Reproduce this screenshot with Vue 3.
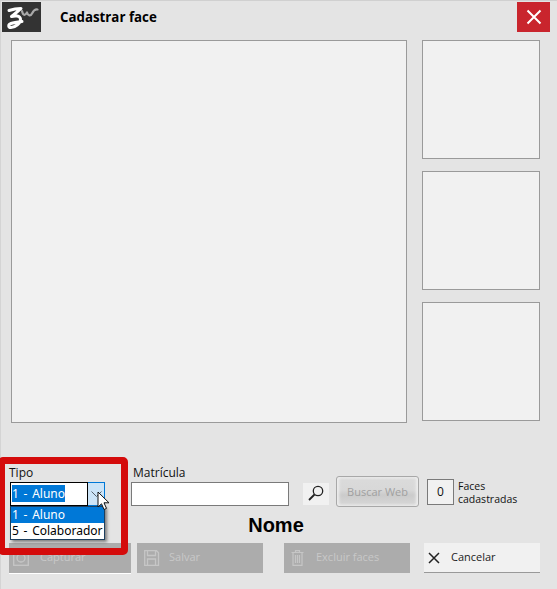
<template>
  <div class="window">
    <header class="title-bar">
      <div class="logo">
        <svg width="39" height="30" viewBox="0 0 39 30">
          <path d="M7 8.5C10 7.5 15 6.5 19 6.5C16.5 9 13 11.5 9.5 14.5C13 13.5 18 13.5 18.5 17C19 21 13 25.5 9 25.5C6 25.5 6 22.5 9 21.5C12 20.5 16 20 20 19.5" fill="none" stroke="#fff" stroke-width="3" stroke-linecap="round" stroke-linejoin="round" />
          <path d="M20 9C21 13.5 23 14 25 10.5C26 14 28.5 14.5 30 11.5C31 9.5 33 7 35.5 7.5" fill="none" stroke="#a8a8a8" stroke-width="2.2" stroke-linecap="round" stroke-linejoin="round" />
        </svg>
      </div>
      <h1 class="title">Cadastrar face</h1>
      <button class="close">
        <svg width="16" height="16" viewBox="0 0 16 16">
          <path d="M1.5 1.5L14.5 14.5M14.5 1.5L1.5 14.5" stroke="#fff" stroke-width="2" fill="none" />
        </svg>
      </button>
    </header>

    <section class="preview">
      <div class="main-frame"></div>
      <div class="thumbs">
        <div class="thumb"></div>
        <div class="thumb"></div>
        <div class="thumb"></div>
      </div>
    </section>

    <section class="form-row">
      <div class="field tipo">
        <label>Tipo</label>
        <div class="combo">
          <div class="combo-value"><span class="selected">{{ tipos[0] }}</span></div>
          <div class="combo-arrow">
            <svg width="11" height="7" viewBox="0 0 11 7">
              <path d="M0.5 0.5L5.5 5.5L10.5 0.5" fill="none" stroke="#56606a" stroke-width="1" />
            </svg>
          </div>
          <ul class="dropdown">
            <li v-for="(t, i) in tipos" :key="t" :class="{ active: i === 0 }">{{ t }}</li>
          </ul>
          <svg class="cursor" width="14" height="21" viewBox="0 0 14 21">
            <path d="M1 1V16L4.5 12.8L7 18.5L9.5 17.4L7 11.8H12Z" fill="#fff" stroke="#111" stroke-width="1" />
          </svg>
        </div>
      </div>
      <div class="field matricula">
        <label>Matrícula</label>
        <input type="text" />
      </div>
      <button class="search">
        <svg width="20" height="20" viewBox="0 0 20 20">
          <circle cx="12" cy="7" r="4.7" fill="none" stroke="#222" stroke-width="1.3" />
          <path d="M8.5 10.5L3 16" stroke="#222" stroke-width="1.8" fill="none" />
        </svg>
      </button>
      <button class="web">Buscar Web</button>
      <div class="count">0</div>
      <div class="count-label">Faces<br />cadastradas</div>
    </section>

    <div class="nome">Nome</div>

    <section class="actions">
      <button class="action capturar">
        <svg width="16" height="16" viewBox="0 0 16 16">
          <rect x="0.7" y="1.7" width="14.6" height="13.6" fill="none" stroke="#c6c6c6" stroke-width="1.3" />
          <circle cx="8" cy="8" r="4" fill="none" stroke="#c6c6c6" stroke-width="1.3" />
        </svg>
        <span>Capturar</span>
      </button>
      <button class="action salvar">
        <svg width="16" height="16" viewBox="0 0 16 16">
          <path d="M0.7 0.7H12.5L14.5 2.7V15.3H0.7Z M3.5 0.7V5.5H11.5V0.7 M3.5 15.3V9H11.5V15.3" fill="none" stroke="#c6c6c6" stroke-width="1.3" />
        </svg>
        <span>Salvar</span>
      </button>
      <button class="action excluir">
        <svg width="16" height="16" viewBox="0 0 16 16">
          <path d="M0.5 2.5H12.5M4.5 2.5V0.6H8.5V2.5M2 2.5V15.4H11V2.5M4.5 5V13M6.5 5V13M8.5 5V13" fill="none" stroke="#c6c6c6" stroke-width="1.2" />
        </svg>
        <span>Excluir faces</span>
      </button>
      <button class="action cancelar">
        <svg width="12" height="12" viewBox="0 0 12 12">
          <path d="M1 1L11 11M11 1L1 11" fill="none" stroke="#222" stroke-width="1.5" />
        </svg>
        <span>Cancelar</span>
      </button>
    </section>

    <div class="highlight"></div>
  </div>
</template>

<script setup>
const tipos = ['1 - Aluno', '5 - Colaborador']
</script>

<style>
html, body {
  margin: 0;
  background: #e4e4e4;
}
</style>

<style scoped>
.window {
  position: relative;
  width: 557px;
  height: 589px;
  box-sizing: border-box;
  padding-top: 2px;
  overflow: hidden;
  background: #e4e4e4;
  border-top: 1px solid #d0d0d0;
  box-shadow: inset 1px 0 0 #d4d4d4;
  font-family: "Open Sans", "Noto Sans", sans-serif;
  color: #111;
}

.title-bar {
  display: flex;
  align-items: center;
  height: 30px;
  margin-top: -1px;
  padding: 0 7px 0 2px;
}

.logo {
  width: 39px;
  height: 30px;
  background: #333;
}

.logo svg {
  display: block;
}

.title {
  flex: 1;
  margin: 0 0 0 19px;
  font-size: 13.3px;
  font-weight: 700;
  color: #000;
}

.close {
  display: flex;
  align-items: center;
  justify-content: center;
  width: 33px;
  height: 30px;
  padding: 0;
  border: none;
  background: #c9252d;
}

.preview {
  display: flex;
  gap: 15px;
  margin-top: 8px;
  padding-left: 11px;
}

.main-frame,
.thumb {
  box-sizing: border-box;
  background: #f1f1f1;
  border: 1px solid #9a9a9a;
}

.main-frame {
  width: 396px;
  height: 383px;
}

.thumbs {
  display: flex;
  flex-direction: column;
  gap: 12px;
}

.thumb {
  width: 118px;
  height: 119px;
}

.form-row {
  display: flex;
  align-items: flex-start;
  height: 48px;
  margin-top: 42px;
  padding-left: 10px;
  box-sizing: border-box;
}

.field label {
  display: block;
  height: 17px;
  font-size: 12px;
  line-height: 15px;
}

.tipo {
  width: 121px;
}

.tipo label {
  margin-left: -1px;
}

.combo {
  position: relative;
  display: flex;
  width: 95px;
  height: 24px;
  box-sizing: border-box;
  border: 1px solid #0078d7;
  font-family: "Noto Sans", sans-serif;
  font-size: 12px;
  word-spacing: 1.6px;
}

.combo-value {
  flex: 1;
  padding: 2px 0 0 1px;
  background: #fff;
  border: 1px solid #000;
  margin: -1px 0 -1px -1px;
  line-height: 17px;
}

.selected {
  display: inline-block;
  height: 17px;
  background: #0078d7;
  color: #fff;
}

.combo-arrow {
  display: flex;
  align-items: center;
  justify-content: center;
  width: 16px;
  background: #cce4f7;
}

.dropdown {
  position: absolute;
  top: 23px;
  left: -1px;
  width: 95px;
  box-sizing: border-box;
  margin: 0;
  padding: 0;
  list-style: none;
  background: #fff;
  border: 1px solid #1c3f5f;
  box-shadow: 2px 2px 3px rgba(0, 0, 0, 0.45);
  z-index: 2;
}

.dropdown li {
  height: 16px;
  padding-left: 1px;
  line-height: 16px;
  white-space: nowrap;
  color: #000;
}

.dropdown li.active {
  background: #0078d7;
  color: #fff;
}

.cursor {
  position: absolute;
  top: 8px;
  left: 86px;
  z-index: 3;
}

.matricula {
  width: 158px;
}

.matricula label {
  margin-left: 2px;
}

.matricula input {
  display: block;
  width: 158px;
  height: 24px;
  box-sizing: border-box;
  border: 1px solid #7a7a7a;
  background: #fff;
  padding: 0;
}

.search {
  display: flex;
  align-items: center;
  justify-content: center;
  width: 26px;
  height: 22px;
  margin: 18px 0 0 14px;
  padding: 0;
  border: none;
  background: #f1f1f1;
}

.web {
  width: 83px;
  height: 31px;
  margin: 11px 0 0 7px;
  padding: 0;
  border: 1px solid #a8a8a8;
  border-radius: 3px;
  background: linear-gradient(#e6e6e6, #dadada 12%, #d8d8d8 45%, #cbcbcb 62%, #d4d4d4 88%, #e4e4e4);
  box-shadow: inset 3px 0 3px -1px #eee, inset -3px 0 3px -1px #eee;
  font-family: inherit;
  font-size: 11px;
  color: #a0a0a0;
}

.count {
  width: 27px;
  height: 26px;
  margin: 14px 0 0 8px;
  box-sizing: border-box;
  border: 1px solid #7a7a7a;
  background: #f1f1f1;
  font-size: 12px;
  line-height: 24px;
  text-align: center;
}

.count-label {
  margin: 15px 0 0 4px;
  font-size: 10.5px;
  line-height: 13px;
}

.nome {
  height: 24px;
  padding-right: 5px;
  font-family: "Liberation Sans", sans-serif;
  font-size: 20px;
  font-weight: 700;
  line-height: 24px;
  text-align: center;
  color: #000;
}

.actions {
  display: flex;
  margin-top: 6px;
  padding-left: 9px;
}

.action {
  display: flex;
  align-items: center;
  height: 30px;
  padding: 0 0 3px 7px;
  border: none;
  background: #acacac;
  font-family: inherit;
  font-size: 11px;
  color: #c8c8c8;
}

.action span {
  margin-left: 9px;
}

.action svg {
  margin-top: 3px;
}

.capturar {
  width: 122px;
  padding-left: 4px;
  box-shadow: 0 1px 0 #fff;
}

.capturar span {
  margin-left: 11px;
}

.salvar {
  width: 126px;
  margin-left: 6px;
}

.excluir {
  width: 126px;
  margin-left: 21px;
}

.cancelar {
  width: 116px;
  margin-left: 14px;
  padding-left: 4px;
  background: #f1f1f1;
  border-bottom: 1px solid #999;
  color: #222;
}

.cancelar span {
  margin-left: 11px;
}

.highlight {
  position: absolute;
  left: -2px;
  top: 456px;
  width: 130px;
  height: 98px;
  box-sizing: border-box;
  border: 7px solid #d40b0b;
  border-radius: 5px;
  pointer-events: none;
  z-index: 4;
}
</style>
